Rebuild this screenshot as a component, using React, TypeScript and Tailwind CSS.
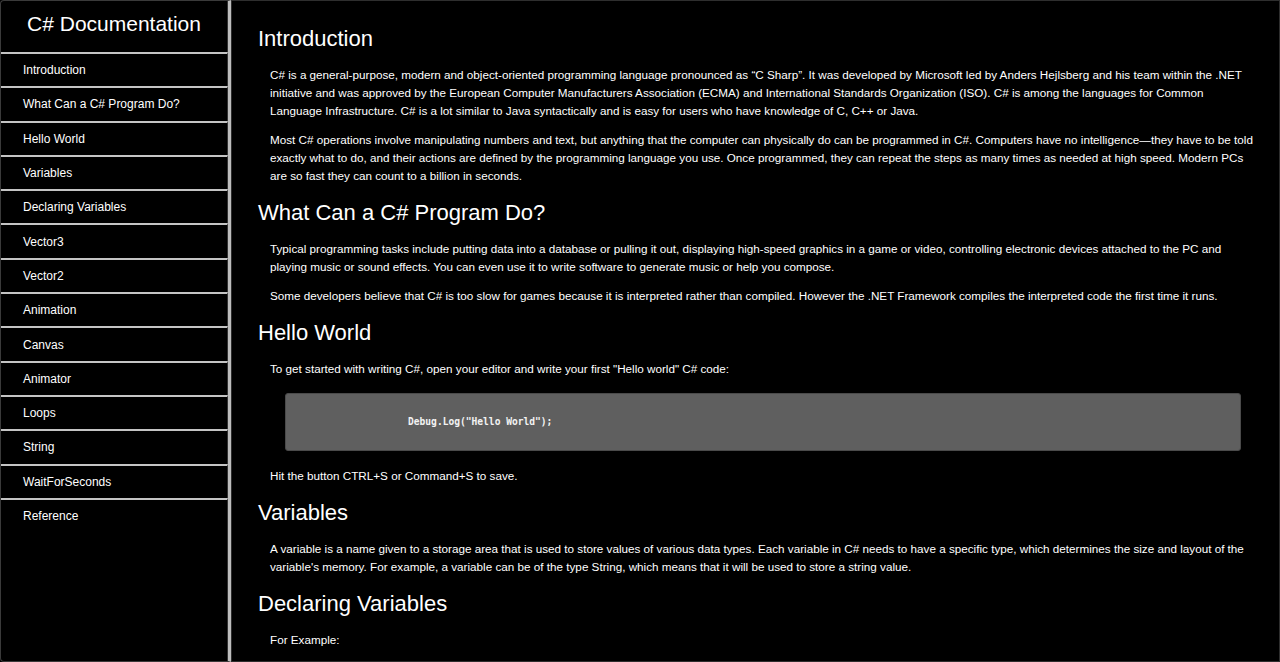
import React from 'react';

const links = [
  'Introduction',
  'What Can a C# Program Do?',
  'Hello World',
  'Variables',
  'Declaring Variables',
  'Vector3',
  'Vector2',
  'Animation',
  'Canvas',
  'Animator',
  'Loops',
  'String',
  'WaitForSeconds',
  'Reference',
];

const Section = ({ title, children }: { title: string; children: React.ReactNode }) => (
  <section>
    <h2 className="text-[22px] leading-[28px] mb-[13px] text-white">{title}</h2>
    <div className="ml-[12px] flex flex-col gap-[11px] text-[11.7px] leading-[18px] text-white">{children}</div>
  </section>
);

const Code = ({ children }: { children: React.ReactNode }) => (
  <pre
    className="mx-[15px] mt-[4px] mb-[5px] h-[58px] flex items-center pl-[122px] bg-[#5f5f5f] border border-[#4a4a4a] rounded-[3px] text-[9.6px] font-bold text-[#f2f2f2]"
    style={{ fontFamily: '"DejaVu Sans Mono", "Liberation Mono", monospace' }}
  >
    {children}
  </pre>
);

const App = () => {
  return (
    <div
      className="h-screen flex bg-black text-white overflow-hidden"
      style={{ fontFamily: '"Liberation Sans", Arial, sans-serif' }}
    >
      {/* Sidebar */}
      <nav className="w-[231px] shrink-0 flex flex-col border-y border-l border-[#3a3a3a] border-r-[3px] border-r-[#bdbdbd] rounded-l-[4px]">
        <header className="h-[51px] flex items-center justify-center pb-[5px] border-r border-[#333]">
          <h1 className="text-[21px] text-white">C# Documentation</h1>
        </header>
        {links.map((l) => (
          <a
            key={l}
            href={'#' + l.replace(/ /g, '_')}
            className="h-[34.3px] shrink-0 flex items-center pl-[22px] text-[12px] text-white border-t-2 border-t-[#c4c4c4] border-r border-r-[#333]"
          >
            {l}
          </a>
        ))}
        <div className="flex-1 border-r border-[#333]" />
      </nav>

      {/* Main */}
      <main className="flex-1 border border-[#2e2e2e] pl-[26px] pr-[23px] pt-[24px] flex flex-col gap-[14px] overflow-hidden">
        <Section title="Introduction">
          <p>
            C# is a general-purpose, modern and object-oriented programming language pronounced as “C Sharp”. It was
            developed by Microsoft led by Anders Hejlsberg and his team within the .NET initiative and was approved by the
            European Computer Manufacturers Association (ECMA) and International Standards Organization (ISO). C# is among
            the languages for Common Language Infrastructure. C# is a lot similar to Java syntactically and is easy for users
            who have knowledge of C, C++ or Java.
          </p>
          <p>
            Most C# operations involve manipulating numbers and text, but anything that the computer can physically do can be
            programmed in C#. Computers have no intelligence—they have to be told exactly what to do, and their actions are
            defined by the programming language you use. Once programmed, they can repeat the steps as many times as needed at
            high speed. Modern PCs are so fast they can count to a billion in seconds.
          </p>
        </Section>

        <Section title="What Can a C# Program Do?">
          <p>
            Typical programming tasks include putting data into a database or pulling it out, displaying high-speed graphics
            in a game or video, controlling electronic devices attached to the PC and playing music or sound effects. You can
            even use it to write software to generate music or help you compose.
          </p>
          <p>
            Some developers believe that C# is too slow for games because it is interpreted rather than compiled. However the
            .NET Framework compiles the interpreted code the first time it runs.
          </p>
        </Section>

        <Section title="Hello World">
          <p>To get started with writing C#, open your editor and write your first "Hello world" C# code:</p>
          <Code>Debug.Log("Hello World");</Code>
          <p>Hit the button CTRL+S or Command+S to save.</p>
        </Section>

        <Section title="Variables">
          <p>
            A variable is a name given to a storage area that is used to store values of various data types. Each variable in
            C# needs to have a specific type, which determines the size and layout of the variable's memory. For example, a
            variable can be of the type String, which means that it will be used to store a string value.
          </p>
        </Section>

        <Section title="Declaring Variables">
          <p>For Example:</p>
        </Section>
      </main>
    </div>
  );
};

export default App;
